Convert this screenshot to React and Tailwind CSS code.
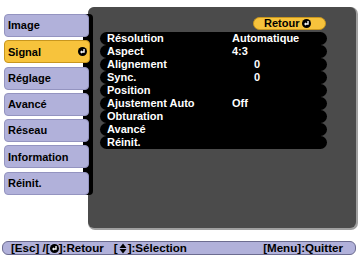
import React from 'react';

const ReturnIcon = ({ className = 'w-[9px] h-[9px]' }) => (
  <svg viewBox="0 0 10 10" className={className}>
    <circle cx="5" cy="5" r="5" fill="#000" />
    <path d="M6.7 2.3 V5.6 H4" stroke="#fff" strokeWidth="1.5" fill="none" />
    <path d="M4.4 3.6 L2.2 5.6 L4.4 7.6 Z" fill="#fff" />
  </svg>
);

const UpDownIcon = () => (
  <svg viewBox="0 0 8 11" className="w-[8px] h-[11px] mx-[1px]">
    <path d="M4 0.5 L7.5 5 H0.5 Z" fill="#000" />
    <path d="M4 10.5 L7.5 6 H0.5 Z" fill="#000" />
  </svg>
);

const tabs = ['Image', 'Signal', 'Réglage', 'Avancé', 'Réseau', 'Information', 'Réinit.'];

const rows = [
  { label: 'Résolution', value: 'Automatique' },
  { label: 'Aspect', value: '4:3' },
  { label: 'Alignement', value: '0', indent: true },
  { label: 'Sync.', value: '0', indent: true },
  { label: 'Position' },
  { label: 'Ajustement Auto', value: 'Off' },
  { label: 'Obturation' },
  { label: 'Avancé' },
  { label: 'Réinit.' }
];

const App = () => {
  return (
    <div className="w-[360px] h-[259px] bg-white overflow-hidden font-['Liberation_Sans',Arial,sans-serif] text-[11px] font-bold">
      <div className="flex pt-[7px]">
        {/* Left tabs */}
        <div className="relative z-10 w-[93px] -mr-[5px] pl-[4px] pt-[7px] shrink-0">
          <div className="flex flex-col gap-[3.3px] bg-[linear-gradient(to_right,transparent_79px,#000_79px)] rounded-r-[4px]">
            {tabs.map(tab => (
              tab === 'Signal' ? (
                <div
                  key={tab}
                  className="w-[86px] h-[23px] flex items-center justify-between pl-[3px] pr-[2px] bg-[#f7c33c] border border-[#c8961e] rounded-[4px] text-black"
                >
                  <span>{tab}</span>
                  <ReturnIcon />
                </div>
              ) : (
                <div
                  key={tab}
                  className="w-[85px] h-[23px] flex items-center pl-[3px] bg-[#b1b1da] border border-[#9494c0] rounded-[4px] text-black"
                >
                  {tab}
                </div>
              )
            ))}
          </div>
        </div>

        {/* Main panel */}
        <div className="w-[268px] h-[221px] shrink-0 bg-[#4b4b4b] rounded-[6px] shadow-[1px_1px_0_1px_#a0a0a0] pt-[10px] pl-[12px]">
          <div className="ml-[153px] w-[73px] h-[13px] flex items-center pl-[10px] gap-[3px] bg-[#f7c33c] border border-[#c8961e] rounded-full text-black leading-none">
            <span>Retour</span>
            <ReturnIcon />
          </div>
          <div className="mt-[2px] w-[227px] flex flex-col">
            {rows.map(row => (
              <div key={row.label} className="h-[13px] flex items-center bg-black rounded-full pl-[7px] text-white leading-none">
                <span className="w-[125px] shrink-0">{row.label}</span>
                {row.value && (
                  <span className={row.indent ? 'pl-[22px]' : ''}>{row.value}</span>
                )}
              </div>
            ))}
          </div>
        </div>
      </div>

      {/* Bottom help bar */}
      <div className="mt-[13px] ml-[2px] w-[354px] h-[14px] flex items-center justify-between pl-[8px] pr-[12px] bg-[#b1b1da] border border-[#6c6c90] rounded-[6px] text-black leading-none text-[11.6px]">
        <div className="flex items-center">
          <span>[Esc] /[</span>
          <ReturnIcon />
          <span>]:Retour</span>
          <span className="ml-[10px]">[</span>
          <UpDownIcon />
          <span>]:Sélection</span>
        </div>
        <span>[Menu]:Quitter</span>
      </div>
    </div>
  );
};

export default App;
